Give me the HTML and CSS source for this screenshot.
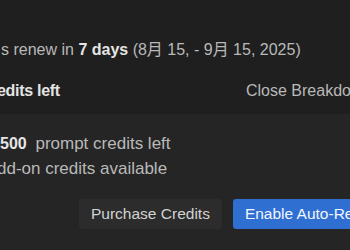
FILE: index.html
```html
<!DOCTYPE html>
<html>
<head>
<meta charset="utf-8">
<link rel="stylesheet" href="styles.css">
</head>
<body>
<div class="page">
  <div class="summary">
    <p class="renew">s renew in <b>7 days</b> (8月 15, - 9月 15, 2025)</p>
    <div class="head-row">
      <span class="head-title">edits left</span>
      <span class="close-link">Close Breakdown</span>
    </div>
  </div>
  <div class="panel">
    <p class="line line-count"><b class="count">500</b> prompt credits left</p>
    <p class="line line-addon">dd-on credits available</p>
    <div class="actions">
      <button class="btn btn-secondary">Purchase Credits</button>
      <button class="btn btn-primary">Enable Auto-Refill</button>
    </div>
  </div>
</div>
</body>
</html>
```

FILE: styles.css
```css
html, body {
  margin: 0;
  padding: 0;
  width: 350px;
  height: 250px;
  overflow: hidden;
  background: #1f1f1f;
}

.page {
  width: 420px;
  font-family: "Liberation Sans", "Noto Sans CJK SC", sans-serif;
  font-size: 16px;
  line-height: 24px;
  color: #b9b9b9;
}

.summary {
  padding-top: 38px;
  padding-bottom: 11px;
}

.renew {
  margin: 0;
  padding-left: 1px;
  white-space: nowrap;
}

.renew b {
  color: #e4e4e4;
  font-weight: 700;
}

.head-row {
  margin-top: 17px;
  display: grid;
  grid-template-columns: 246px auto;
  white-space: nowrap;
}

.head-title {
  font-weight: 700;
  color: #e4e4e4;
  margin-left: -3px;
  letter-spacing: -0.3px;
}

.close-link {
  color: #b9b9b9;
}

.panel {
  background: #252525;
  padding-top: 18px;
  height: 118px;
}

.line {
  margin: 0;
  white-space: nowrap;
  font-size: 17px;
}

.line-addon {
  margin-left: -3px;
  margin-top: 1px;
}

.count {
  color: #e6e6e6;
  font-weight: 700;
  font-size: 16px;
  margin-right: 4px;
}

.actions {
  display: flex;
  gap: 11px;
  margin-top: 18px;
  padding-left: 79px;
}

.btn {
  font-family: inherit;
  font-size: 15.5px;
  line-height: 30px;
  height: 30px;
  padding: 0 12px;
  border: none;
  border-radius: 3px;
  white-space: nowrap;
}

.btn-secondary {
  background: #2c2c2c;
  color: #d2d2d2;
}

.btn-primary {
  background: #2f6fd2;
  color: #f2f6ff;
}
```
